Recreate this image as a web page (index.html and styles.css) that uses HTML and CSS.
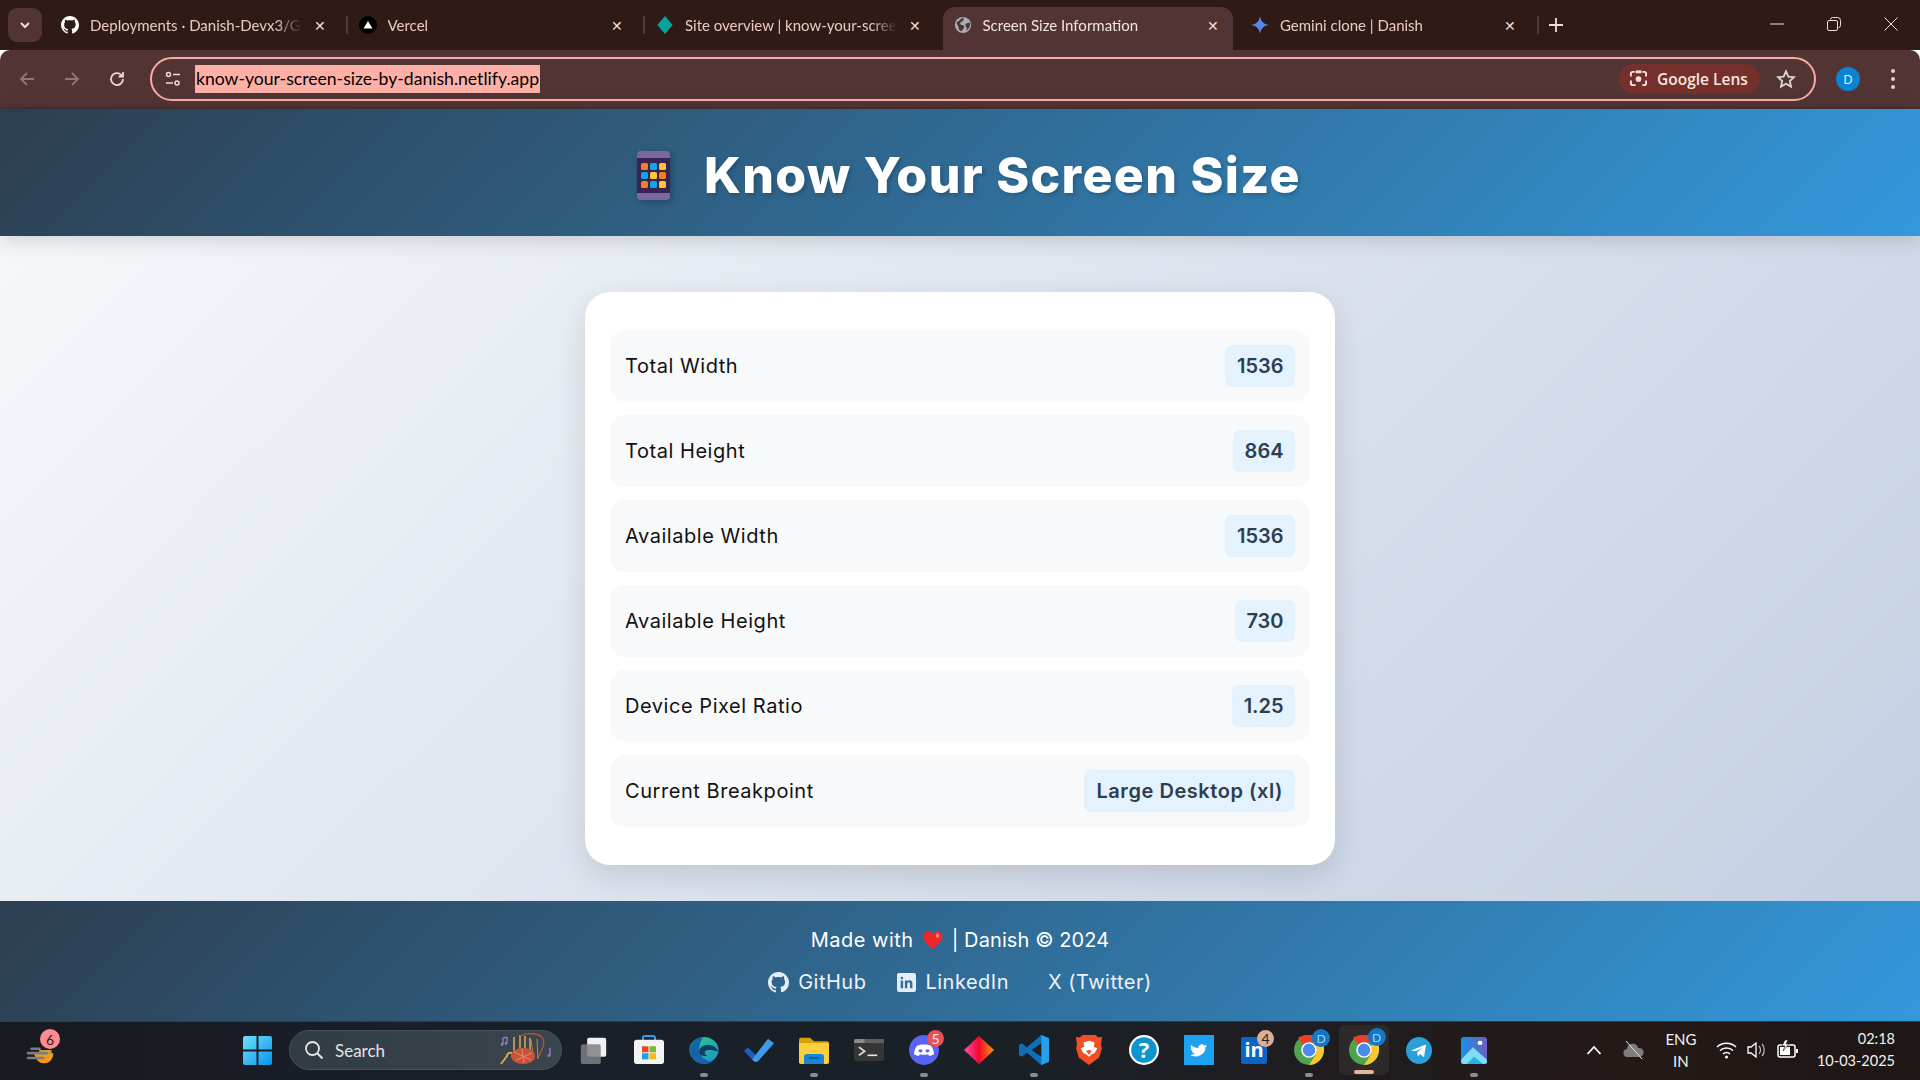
FILE: index.html
```html
<!DOCTYPE html>
<html lang="en">
<head>
<meta charset="utf-8">
<title>Screen Size Information</title>
<link rel="stylesheet" href="styles.css">
</head>
<body>
<div class="screen">
  <div class="tabstrip">
    <div class="tabmenu"><svg width="12" height="8" viewBox="0 0 12 8"><path d="M2 2l4 4 4-4" fill="none" stroke="#f3dcd6" stroke-width="2"/></svg></div>
    <div class="tab">
      <svg class="favicon" viewBox="0 0 16 16"><path fill="#fff" d="M8 0C3.600 0 0 3.600 0 8c0 3.500 2.300 6.500 5.500 7.600.4.100.5-.2.5-.4v-1.400c-2.200.5-2.700-1-2.700-1-.4-.9-.9-1.200-.9-1.200-.7-.5.100-.5.100-.5.800.100 1.200.8 1.200.8.700 1.200 1.900.9 2.300.7.100-.5.300-.9.500-1.100-1.800-.2-3.700-.9-3.700-4 0-.9.300-1.600.8-2.100-.1-.2-.4-1 .1-2.100 0 0 .7-.2 2.200.8.600-.2 1.300-.3 2-.3s1.400.1 2 .3c1.500-1 2.200-.8 2.200-.8.400 1.100.2 1.900.1 2.100.5.600.8 1.300.8 2.100 0 3.100-1.900 3.700-3.700 3.900.3.300.6.800.6 1.500v2.200c0 .2.100.5.600.4C13.700 14.500 16 11.500 16 8c0-4.400-3.600-8-8-8z"/></svg>
      <span class="tabtitle">Deployments · Danish-Devx3/Gemini</span>
      <span class="tabclose">✕</span>
    </div>
    <div class="tab sep">
      <svg class="favicon" viewBox="0 0 20 20"><circle cx="10" cy="10" r="10" fill="#000"/><path d="M10 5.500l5 8.500H5z" fill="#fff"/></svg>
      <span class="tabtitle">Vercel</span>
      <span class="tabclose">✕</span>
    </div>
    <div class="tab sep">
      <svg class="favicon" viewBox="0 0 20 20"><path d="M10 0l8.500 10L10 20 1.500 10z" fill="#05a39a"/></svg>
      <span class="tabtitle">Site overview | know-your-screen-size</span>
      <span class="tabclose">✕</span>
    </div>
    <div class="tab active">
      <svg class="favicon" viewBox="0 0 20 20"><circle cx="10" cy="10" r="9" fill="#a5adb5"/><path d="M3 7c3-1 4-4 7-5 2 2 0 3-1 4s-3 1-2 3 3 0 4 2-1 4-3 6c-3-1-3-4-3-5s-2-2-2-5zM13 9c2-1 3-2 5-1 0 4-2 7-5 9 1-2 2-3 1-4s-2-3-1-4z" fill="#513433"/></svg>
      <span class="tabtitle">Screen Size Information</span>
      <span class="tabclose">✕</span>
    </div>
    <div class="tab">
      <svg class="favicon" viewBox="0 0 20 20"><path d="M10 0c.8 5.500 3.500 9 10 10-6.500 1-9.200 4.500-10 10-.8-5.500-3.500-9-10-10 6.500-1 9.200-4.500 10-10z" fill="#5b86e8"/></svg>
      <span class="tabtitle">Gemini clone | Danish</span>
      <span class="tabclose">✕</span>
    </div>
    <div class="newtab"><svg width="14" height="14" viewBox="0 0 14 14"><path d="M7 0v14M0 7h14" stroke="#f3dcd6" stroke-width="1.800"/></svg></div>
    <div class="winctrl">
      <svg width="14" height="14" viewBox="0 0 14 14"><path d="M0 7h14" stroke="#f0dcd8" stroke-width="1"/></svg>
      <svg width="14" height="14" viewBox="0 0 14 14"><path d="M3.500 2.500a2 2 0 0 1 2-2h5a3 3 0 0 1 3 3v5a2 2 0 0 1-2 2M2 3.500h7a1.500 1.500 0 0 1 1.500 1.500v7A1.500 1.500 0 0 1 9 13.500H2A1.500 1.500 0 0 1 .5 12V5A1.500 1.500 0 0 1 2 3.500z" fill="none" stroke="#f0dcd8"/></svg>
      <svg width="14" height="14" viewBox="0 0 14 14"><path d="M.5.500l13 13M13.500.500l-13 13" stroke="#f0dcd8" stroke-width="1"/></svg>
    </div>
  </div>

  <div class="toolbar">
    <div class="navs">
      <svg width="18" height="18" viewBox="0 0 18 18"><path d="M16 9H3M9 3L3 9l6 6" fill="none" stroke="#8f7674" stroke-width="1.800"/></svg>
      <svg width="18" height="18" viewBox="0 0 18 18"><path d="M2 9h13M9 3l6 6-6 6" fill="none" stroke="#8f7674" stroke-width="1.800"/></svg>
      <svg width="18" height="18" viewBox="0 0 18 18"><path d="M15 9a6 6 0 1 1-1.800-4.200L15 6.500M15 2v4.500h-4.500" fill="none" stroke="#eed5cf" stroke-width="1.800"/></svg>
    </div>
    <div class="omnibox">
      <svg class="tune" width="16" height="16" viewBox="0 0 16 16"><g fill="none" stroke="#f3dcd6" stroke-width="1.500"><circle cx="3.500" cy="3.500" r="2"/><path d="M8 3.500h7M1 12h7"/><circle cx="12" cy="12" r="2"/></g></svg>
      <span class="url">know-your-screen-size-by-danish.netlify.app</span>
      <div class="lens">
        <svg width="19" height="19" viewBox="0 0 20 20"><g fill="none" stroke="#fbe4de" stroke-width="2"><path d="M6 3H4a2 2 0 0 0-2 2v3M2 12v3a2 2 0 0 0 2 2h3M14 3h2a2 2 0 0 1 2 2v3M18 12v3a2 2 0 0 1-2 2h-2"/><path d="M7 3h6" stroke-width="3"/></g><circle cx="10" cy="10.500" r="3" fill="#fbe4de"/></svg>
        <span>Google Lens</span>
      </div>
      <svg class="star" width="20" height="20" viewBox="0 0 22 22"><path d="M11 2.500l2.600 5.800 6.200.7-4.600 4.200 1.300 6.200L11 16.200l-5.500 3.200 1.300-6.200L2.200 9l6.200-.7z" fill="none" stroke="#e4d2ce" stroke-width="2"/></svg>
    </div>
    <div class="avatar">D</div>
    <div class="kebab"><i></i><i></i><i></i></div>
  </div>

  <header class="pagehead">
    <svg class="phone" width="33" height="49" viewBox="0 0 33 49">
      <rect width="33" height="49" rx="4" fill="#7a68a3"/>
      <rect y="7" width="33" height="35" fill="#3b2350"/>
      <g>
        <rect x="4" y="12" width="7" height="7" rx="1.500" fill="#f57c20"/><rect x="13" y="12" width="7" height="7" rx="1.500" fill="#0ea5e9"/><rect x="22" y="12" width="7" height="7" rx="1.500" fill="#fcc932"/>
        <rect x="4" y="21" width="7" height="7" rx="1.500" fill="#0ea5e9"/><rect x="13" y="21" width="7" height="7" rx="1.500" fill="#fcc932"/><rect x="22" y="21" width="7" height="7" rx="1.500" fill="#f57c20"/>
        <rect x="4" y="30" width="7" height="7" rx="1.500" fill="#f57c20"/><rect x="13" y="30" width="7" height="7" rx="1.500" fill="#0ea5e9"/><rect x="22" y="30" width="7" height="7" rx="1.500" fill="#fcc932"/>
      </g>
    </svg>
    <h1 class="pagetitle">Know Your Screen Size</h1>
  </header>

  <main class="content">
    <section class="card">
      <div class="row"><span class="label">Total Width</span><span class="chip">1536</span></div>
      <div class="row"><span class="label">Total Height</span><span class="chip">864</span></div>
      <div class="row"><span class="label">Available Width</span><span class="chip">1536</span></div>
      <div class="row"><span class="label">Available Height</span><span class="chip">730</span></div>
      <div class="row"><span class="label">Device Pixel Ratio</span><span class="chip">1.25</span></div>
      <div class="row"><span class="label">Current Breakpoint</span><span class="chip wordy">Large Desktop (xl)</span></div>
    </section>
  </main>

  <footer class="pagefoot">
    <p class="madewith"><span>Made with</span>
      <svg class="heart" width="20" height="20" viewBox="0 0 20 20"><path d="M10 19C4 14 .5 10.500.5 6.500.5 3.500 2.800 1.500 5.300 1.500 7.200 1.500 9 2.500 10 4.500c1-2 2.800-3 4.700-3 2.500 0 4.800 2 4.800 5 0 4-3.500 7.500-9.500 12.500z" fill="#f0262c"/><ellipse cx="14.500" cy="5.500" rx="1.500" ry="2.200" fill="#ff8f8f"/></svg>
      <span class="byline">| Danish © 2024</span></p>
    <nav class="links">
      <a class="link"><svg width="21" height="21" viewBox="0 0 16 16"><path fill="#e6edf4" d="M8 0C3.600 0 0 3.600 0 8c0 3.500 2.300 6.500 5.500 7.600.4.100.5-.2.5-.4v-1.400c-2.200.5-2.700-1-2.700-1-.4-.9-.9-1.200-.9-1.200-.7-.5.100-.5.100-.5.800.100 1.200.8 1.200.8.700 1.200 1.900.9 2.300.7.100-.5.300-.9.500-1.100-1.800-.2-3.700-.9-3.700-4 0-.9.300-1.600.8-2.100-.1-.2-.4-1 .1-2.100 0 0 .7-.2 2.200.8.600-.2 1.300-.3 2-.3s1.400.1 2 .3c1.500-1 2.200-.8 2.200-.8.400 1.100.2 1.900.1 2.100.5.600.8 1.300.8 2.100 0 3.100-1.900 3.700-3.700 3.900.3.300.6.800.6 1.500v2.200c0 .2.100.5.600.4C13.700 14.500 16 11.500 16 8c0-4.400-3.600-8-8-8z"/></svg>GitHub</a>
      <a class="link"><svg width="19" height="19" viewBox="0 0 18 18"><rect width="18" height="18" rx="2" fill="#e6edf4"/><path d="M3.500 7h2.300v7.500H3.500zM3.400 4.700a1.200 1.200 0 1 1 2.400 0 1.200 1.200 0 0 1-2.400 0zM7.500 7h2.200v1c.5-.8 1.300-1.200 2.300-1.200 2 0 2.600 1.300 2.600 3.200v4.500h-2.300v-4c0-1-.2-1.700-1.200-1.700s-1.400.8-1.400 1.800v3.900H7.500z" fill="#316e9c"/></svg>LinkedIn</a>
      <a class="link xlink">X (Twitter)</a>
    </nav>
  </footer>

  <div class="taskbar">
    <div class="widget">
      <svg width="32" height="30" viewBox="0 0 36 36" preserveAspectRatio="none"><path d="M11 22h22c0 6-4 12-10 12h-2c-4 0-8-5-10-12z" fill="#f39a18"/><path d="M17 18h14v6H17z" fill="#c9a02e"/><rect x="7" y="15" width="12" height="3" rx="1.500" fill="#7b7d80"/><rect x="3" y="20" width="24" height="3.500" rx="1.700" fill="#7b7d80"/><rect x="3" y="26" width="20" height="3" rx="1.500" fill="#7b7d80"/></svg>
      <span class="badge widgetbadge">6</span>
    </div>
    <div class="slot win">
      <svg width="29" height="29" viewBox="0 0 29 29"><defs><linearGradient id="wg" x1="0" y1="0" x2="1" y2="1"><stop offset="0" stop-color="#6ee0f5"/><stop offset="1" stop-color="#0a93f0"/></linearGradient></defs><path d="M0 2a2 2 0 0 1 2-2h11.500v13.500H0zM15.500 0H27a2 2 0 0 1 2 2v11.500H15.500zM0 15.500h13.500V29H2a2 2 0 0 1-2-2zM15.500 15.500H29V27a2 2 0 0 1-2 2H15.500z" fill="url(#wg)"/></svg>
    </div>
    <div class="search">
      <svg width="20" height="20" viewBox="0 0 20 20"><circle cx="8.500" cy="8.500" r="6.500" fill="none" stroke="#e6e8ea" stroke-width="1.800"/><path d="M13 13l5.500 5.500" stroke="#e6e8ea" stroke-width="2"/></svg>
      <span class="searchtext">Search</span>
      <svg class="bagpipe" width="60" height="36" viewBox="0 0 60 36"><path d="M16 5v16M22 3v16M27 4v15M32 6v12" stroke="#d9ab55" stroke-width="1.500"/><path d="M22 4c8-4 20-3 23 3s-2 11-5 19" fill="none" stroke="#b3562e" stroke-width="1.300"/><path d="M33 8l3 20M39 7l1 20" stroke="#c8883e" stroke-width="1"/><ellipse cx="25" cy="24" rx="12" ry="8" fill="#c9533a"/><path d="M16 20l17 8M18 28l16-7M24 17l2 14" stroke="#e58a6a" stroke-width="1"/><path d="M14 21c-3-1-5 1-5 3l-6 8" fill="none" stroke="#e0a24e" stroke-width="2"/><path d="M5 6v6M9 5v6M5 6l4-1" fill="none" stroke="#8d7cc7" stroke-width="1.400"/><circle cx="4" cy="12.500" r="1.400" fill="#8d7cc7"/><circle cx="8" cy="11.500" r="1.400" fill="#8d7cc7"/><path d="M52 16v7" stroke="#8d7cc7" stroke-width="1.400"/><circle cx="51" cy="23.500" r="1.500" fill="#8d7cc7"/></svg>
    </div>
    <div class="slot">
      <svg width="29" height="29" viewBox="0 0 32 32" preserveAspectRatio="none"><rect x="9" y="2" width="21" height="21" rx="2" fill="#f1f1f1"/><rect x="2" y="9" width="22" height="22" rx="2" fill="#7e8082" fill-opacity=".85"/></svg>
    </div>
    <div class="slot">
      <svg width="30" height="30" viewBox="0 0 30 32" preserveAspectRatio="none"><path d="M9 6V3a2 2 0 0 1 2-2h8a2 2 0 0 1 2 2v3" fill="none" stroke="#2aa1e6" stroke-width="2"/><rect y="5" width="30" height="26" rx="3" fill="#f3f3f3"/><rect x="8" y="12" width="6.500" height="6.500" fill="#e84a28"/><rect x="15.500" y="12" width="6.500" height="6.500" fill="#7cb82a"/><rect x="8" y="19.500" width="6.500" height="6.500" fill="#1e9fe6"/><rect x="15.500" y="19.500" width="6.500" height="6.500" fill="#fbb816"/></svg>
    </div>
    <div class="slot dot">
      <svg width="30" height="30" viewBox="0 0 32 36" preserveAspectRatio="none"><defs><linearGradient id="eg" x1="0" y1="0" x2="1" y2="1"><stop offset="0" stop-color="#2fd07a"/><stop offset="1" stop-color="#1b8ed6"/></linearGradient></defs><circle cx="16" cy="18" r="15.500" fill="url(#eg)"/><path d="M1 18C1 8 9 2 16 2c-3 3-5 9-5 15 0 8 6 14 14 15-3 2-6 3-9 3C7 35 1 27 1 18z" fill="#1564a8"/><path d="M11 20c0-5 4-8 9-8s10 3 11 8c-5-2-12-3-14 0-1 2 1 4 3 5-5 1-9-1-9-5z" fill="#0f3d66"/></svg>
    </div>
    <div class="slot">
      <svg width="30" height="24" viewBox="0 0 30 28" preserveAspectRatio="none"><path d="M0 15l4-4 8 9-4 5z" fill="#1c5fb8"/><path d="M8 25L24 1l6 5-16 21a3 3 0 0 1-4 0z" fill="#3d9be9"/></svg>
    </div>
    <div class="slot dot">
      <svg width="30" height="27" viewBox="0 0 30 32" preserveAspectRatio="none"><path d="M0 3a2 2 0 0 1 2-2h9l4 4h13a2 2 0 0 1 2 2v6H0z" fill="#d89f0e"/><path d="M0 7h30v23a2 2 0 0 1-2 2H2a2 2 0 0 1-2-2z" fill="#fbcf3b"/><path d="M5 32v-9a3 3 0 0 1 3-3h14a3 3 0 0 1 3 3v9z" fill="#1587d6"/><path d="M10 25h10" stroke="#0d5a9c" stroke-width="2"/></svg>
    </div>
    <div class="slot">
      <svg width="30" height="22" viewBox="0 0 31 27" preserveAspectRatio="none"><rect width="31" height="27" rx="2" fill="#353636"/><path d="M0 2a2 2 0 0 1 2-2h27a2 2 0 0 1 2 2v3H0z" fill="#8a8a8a"/><path d="M11 0h20v5H11z" fill="#5f5f5f"/><path d="M5 10l6 5-6 5" fill="none" stroke="#d8d8d8" stroke-width="2"/><path d="M14 20h10" stroke="#e8e8e8" stroke-width="2"/></svg>
    </div>
    <div class="slot dot">
      <svg width="30" height="30" viewBox="0 0 30 36" preserveAspectRatio="none"><ellipse cx="15" cy="18" rx="15" ry="18" fill="#5865f2"/><path d="M8 13c4-2 10-2 14 0 2 3 3 7 3 10-2 1-3 2-5 2l-1-2c-2 1-6 1-8 0l-1 2c-2 0-3-1-5-2 0-3 1-7 3-10z" fill="#fff"/><circle cx="11.500" cy="19" r="2" fill="#5865f2"/><circle cx="18.500" cy="19" r="2" fill="#5865f2"/></svg>
      <span class="badge discordbadge">5</span>
    </div>
    <div class="slot">
      <svg width="30" height="28" viewBox="0 0 30 34" preserveAspectRatio="none"><defs><linearGradient id="dg" x1="0" x2="1" y1="0" y2="0"><stop offset="0" stop-color="#ff4fa8"/><stop offset=".5" stop-color="#f2072f"/><stop offset="1" stop-color="#ff9a00"/></linearGradient></defs><path d="M15 0l15 17-15 17L0 17z" fill="url(#dg)"/></svg>
    </div>
    <div class="slot dot">
      <svg width="30" height="30" viewBox="0 0 31 36" preserveAspectRatio="none"><path d="M31 4v28l-8 4L8 21 3 26l-3-2V12l3-2 5 5L23 0z" fill="#0e70bd"/><path d="M23 0l8 4v28l-8 4z" fill="#26a0ea"/><path d="M23 10L13 18l10 8z" fill="#1d2025"/></svg>
    </div>
    <div class="slot">
      <svg width="26" height="30" viewBox="0 0 28 36" preserveAspectRatio="none"><path d="M7 0h14l3 3 4-1-1 10 1 4-3 11-11 9-11-9L0 16l1-4L0 2l4 1z" fill="#f04e23"/><path d="M8 9l6-2 6 2-1 5 4 2-3 6-3 1-3 3-3-3-3-1-3-6 4-2z" fill="#fff"/><path d="M11 19l3-1 3 1-3 5z" fill="#f04e23"/></svg>
    </div>
    <div class="slot">
      <svg width="30" height="30" viewBox="0 0 30 30"><circle cx="15" cy="15" r="15" fill="#fff"/><circle cx="15" cy="15" r="12.800" fill="#0b95cf"/><text class="helpmark" x="15" y="23" text-anchor="middle">?</text></svg>
    </div>
    <div class="slot">
      <svg width="30" height="30" viewBox="0 0 30 36" preserveAspectRatio="none"><rect width="30" height="36" fill="#1da1f2"/><path d="M23 13c-.7.300-1.400.5-2 .6.700-.4 1.300-1.100 1.600-2-.7.400-1.400.7-2.200.9a3.500 3.500 0 0 0-6 3.200c-2.900-.2-5.500-1.600-7.200-3.800-1 1.700-.5 3.800 1.100 4.800-.6 0-1.100-.2-1.600-.4 0 1.700 1.200 3.100 2.800 3.500-.5.100-1 .2-1.600.1.500 1.400 1.700 2.400 3.300 2.400A7 7 0 0 1 6 24a10 10 0 0 0 15.400-8.900c.6-.5 1.200-1.100 1.600-2.100z" fill="#fff"/></svg>
    </div>
    <div class="slot">
      <svg width="26" height="27" viewBox="0 0 26 27"><rect width="26" height="27" rx="2" fill="#0a66c2"/><text class="inmark" x="13" y="20" text-anchor="middle">in</text></svg>
      <span class="badge linkbadge">4</span>
    </div>
    <div class="slot dot">
      <svg class="chrome" width="30" height="30" viewBox="0 0 30 36" preserveAspectRatio="none"><ellipse cx="15" cy="18" rx="15" ry="18" fill="#4fa34f"/><path d="M15 0c6 0 11 3.500 13.500 9H15c-3 0-5 2-6 4L4 3c3-2 7-3 11-3z" fill="#e5412f"/><path d="M28.500 9c2.500 5 2 12-.5 18-3 5-7 9-13 9l7-13c1-3 0-6-2-9z" fill="#fbc62f"/><ellipse cx="15" cy="18" rx="7" ry="8.500" fill="#4b8af0" stroke="#fff" stroke-width="1.500"/></svg>
      <span class="badge chromebadge">D</span>
    </div>
    <div class="slot current">
      <svg class="chrome" width="30" height="30" viewBox="0 0 30 36" preserveAspectRatio="none"><ellipse cx="15" cy="18" rx="15" ry="18" fill="#4fa34f"/><path d="M15 0c6 0 11 3.500 13.500 9H15c-3 0-5 2-6 4L4 3c3-2 7-3 11-3z" fill="#e5412f"/><path d="M28.500 9c2.500 5 2 12-.5 18-3 5-7 9-13 9l7-13c1-3 0-6-2-9z" fill="#fbc62f"/><ellipse cx="15" cy="18" rx="7" ry="8.500" fill="#4b8af0" stroke="#fff" stroke-width="1.500"/></svg>
      <span class="badge chromebadge">D</span>
    </div>
    <div class="slot">
      <svg width="26" height="27" viewBox="0 0 26 32" preserveAspectRatio="none"><ellipse cx="13" cy="16" rx="13" ry="16" fill="#2a9fd8"/><path d="M5 16l15-7-2 15-4-4-2 3-1-5 6-5-8 4z" fill="#fff"/></svg>
    </div>
    <div class="slot dot">
      <svg width="26" height="27" viewBox="0 0 26 32" preserveAspectRatio="none"><defs><linearGradient id="pg" x1="0" y1="0" x2="1" y2="0"><stop offset="0" stop-color="#1d8fe8"/><stop offset="1" stop-color="#6b5fc2"/></linearGradient></defs><rect width="26" height="32" rx="3" fill="url(#pg)"/><circle cx="19" cy="7" r="2.500" fill="#fff"/><path d="M0 27L12 12l14 15v2a3 3 0 0 1-3 3H3a3 3 0 0 1-3-3z" fill="#7fdcf2"/><path d="M6 32l7-9 9 9z" fill="#27b0e8"/></svg>
    </div>
    <div class="tray">
      <svg class="trayicon chev" width="16" height="10" viewBox="0 0 16 10"><path d="M1.500 9L8 2l6.500 7" fill="none" stroke="#fff" stroke-width="1.800"/></svg>
      <svg class="trayicon" width="22" height="18" viewBox="0 0 22 18"><path d="M5 16a4 4 0 0 1-1-8c0-3 3-6 7-5 2 0 4 2 4 4a4.500 4.500 0 0 1 2 9z" fill="#7f7c7c"/><path d="M3 0l16 18" stroke="#e8e8e8" stroke-width="1"/></svg>
      <div class="lang"><span>ENG</span><span>IN</span></div>
      <svg class="trayicon" width="21" height="18" viewBox="0 0 21 18"><g fill="none" stroke="#fff" stroke-width="1.500"><path d="M1 6c5-5 14-5 19 0M4 9.500c3.500-3.500 9.500-3.500 13 0M7 13c2-2 5-2 7 0"/></g><circle cx="10.500" cy="16" r="1.500" fill="#fff"/></svg>
      <svg class="trayicon" width="20" height="18" viewBox="0 0 20 18"><path d="M1 6h3l5-4v14l-5-4H1z" fill="none" stroke="#fff" stroke-width="1.300"/><path d="M12 5c2 2 2 6 0 8M15 3c3 3 3 9 0 12" fill="none" stroke="#bfbfbf" stroke-width="1.200"/></svg>
      <svg class="trayicon" width="22" height="20" viewBox="0 0 22 20"><rect x="1" y="5" width="17" height="12" rx="2" fill="none" stroke="#fff" stroke-width="1.500"/><path d="M3 7h10v8H3z" fill="#fff"/><path d="M19 9h2v4h-2z" fill="#fff"/><path d="M8 0L5 6h3l-2 5 6-7H9l2-4z" fill="#fff" stroke="#1d1715" stroke-width=".6"/></svg>
      <div class="clock"><span>02:18</span><span>10-03-2025</span></div>
    </div>
  </div>
</div>
</body>
</html>
```
FILE: styles.css
```css
* { box-sizing: border-box; margin: 0; padding: 0; }
html, body { width: 1920px; height: 1080px; overflow: hidden; }
body { font-family: "Open Sans", "Liberation Sans", sans-serif; }
.screen { width: 1920px; height: 1080px; display: flex; flex-direction: column; overflow: hidden; }

/* browser tab strip */
.tabstrip { height: 50px; background: #2f1a16; display: flex; align-items: flex-end; padding-left: 8px; flex: none; position: relative; }
.tabmenu { width: 34px; height: 34px; margin-bottom: 8px; background: #513433; border-radius: 9px; display: flex; align-items: center; justify-content: center; margin-right: 8px; flex: none; }
.tab { width: 297.5px; height: 43px; display: flex; align-items: center; padding: 0 18px 7px 11px; flex: none; position: relative; color: #e9c9c1; font: 15px "Lato", "Noto Sans", sans-serif; }
.tab.sep::before { content: ""; position: absolute; left: -2px; top: 9px; width: 2px; height: 18px; background: #523a36; }
.tab.active { width: 290px; margin-right: 7.5px; background: #513433; border-radius: 12px 12px 0 0; color: #f5e3de; padding-left: 11px; padding-right: 10px; }
.favicon { width: 18px; height: 18px; flex: none; margin-right: 11px; }
.tabtitle { flex: 1; min-width: 0; overflow: hidden; white-space: nowrap; -webkit-mask-image: linear-gradient(90deg, #000 88%, transparent 100%); mask-image: linear-gradient(90deg, #000 88%, transparent 100%); }
.tabclose { width: 20px; text-align: center; font-size: 14px; color: #f3dcd6; flex: none; margin-left: 8px; }
.newtab { width: 44px; height: 43px; display: flex; align-items: center; justify-content: center; padding-bottom: 7px; margin-left: -4px; position: relative; flex: none; }
.newtab::before { content: ""; position: absolute; left: 3px; top: 9px; width: 2px; height: 18px; background: #523a36; }
.winctrl { margin-left: auto; height: 50px; display: flex; align-items: center; gap: 43px; padding: 0 22px 2px 0; }

/* browser toolbar */
.toolbar { height: 59px; background: #513433; display: flex; align-items: center; border-radius: 10px 10px 0 0; flex: none; border-bottom: 2px solid #463130; }
.navs { display: flex; align-items: center; gap: 27px; padding-left: 18px; width: 150px; flex: none; }
.omnibox { flex: 1 0 0; min-width: 0; height: 44px; border: 2.5px solid #f5aea5; border-radius: 22px; display: flex; align-items: center; padding: 0 18px 0 13px; }
.tune { flex: none; margin-right: 14px; }
.url { background: #ffb0a6; color: #000; font: 17.6px/28px "Lato", "Noto Sans", sans-serif; height: 28px; padding: 0 1px; white-space: nowrap; }
.lens { margin-left: auto; height: 30px; width: 141px; background: #75302c; border-radius: 15px; display: flex; align-items: center; gap: 9px; padding-left: 10px; color: #fbe4de; font: 600 15.5px "Open Sans", sans-serif; flex: none; white-space: nowrap; }
.star { margin-left: 16px; flex: none; }
.avatar { width: 24px; height: 24px; border-radius: 50%; background: #0a84d0; color: #eaf4fb; font: 13px/24px "Open Sans", sans-serif; text-align: center; margin-left: 20px; flex: none; }
.kebab { display: flex; flex-direction: column; gap: 4px; margin-left: 31px; margin-right: 25px; flex: none; }
.kebab i { width: 4px; height: 4px; border-radius: 50%; background: #e8cfc9; display: block; }

/* page */
.pagehead { height: 127px; background: linear-gradient(135deg, #2c3e50, #3498db); display: flex; align-items: center; padding: 6px 0 0 637px; flex: none; box-shadow: 0 4px 20px rgba(0,0,0,.15); position: relative; z-index: 1; }
.phone { flex: none; margin-right: 34px; filter: drop-shadow(2px 2px 3px rgba(0,0,0,.25)); }
.pagetitle { font: 800 50px/1 "Inter", "Open Sans", sans-serif; color: #fff; text-shadow: 2px 2px 4px rgba(0,0,0,.2); white-space: nowrap; letter-spacing: 1.300px; margin-top: -2px; }
.content { height: 665px; background: linear-gradient(135deg, #f5f7fa, #c3cfe2); padding-top: 56px; flex: none; }
.card { width: 750px; height: 573px; margin: 0 auto; background: #fff; border-radius: 25px; padding: 38px 25px; box-shadow: 0 10px 30px rgba(0,0,0,.12); display: flex; flex-direction: column; gap: 13px; }
.row { height: 72px; background: #f8f9fa; border-radius: 15px; display: flex; align-items: center; justify-content: space-between; padding: 0 15px; flex: none; }
.label { font: 400 20px "Inter", sans-serif; color: #111; letter-spacing: .55px; }
.chip { height: 42px; background: #e3f2fd; border-radius: 7px; padding: 0 11.500px; color: #2c3e50; font: 600 20px/42px "Inter", sans-serif; }
.chip.wordy { letter-spacing: .55px; padding: 0 12px; }

/* page footer */
.pagefoot { height: 120px; background: linear-gradient(135deg, #2c3e50, #3498db); color: #fff; flex: none; display: flex; flex-direction: column; align-items: center; padding-top: 24px; gap: 12px; font-family: "Inter", sans-serif; position: relative; z-index: 1; }
.madewith { font-size: 20px; line-height: 30px; display: flex; align-items: center; gap: 9px; font-weight: 400; letter-spacing: .5px; }
.byline { letter-spacing: .1px; }
.heart { flex: none; }
.links { display: flex; align-items: center; gap: 31px; font-size: 20px; line-height: 30px; color: #eef3f8; letter-spacing: .5px; }
.link { display: flex; align-items: center; gap: 9px; }
.xlink { margin-left: 8px; }

/* taskbar */
.taskbar { height: 59px; flex: none; background: linear-gradient(90deg, #191a20 0%, #19202a 30%, #1b2026 55%, #241917 85%, #1d1715 100%); border-top: 1px solid #3a3a3c; display: flex; align-items: center; position: relative; padding-bottom: 2px; }
.widget { width: 80px; height: 56px; display: flex; align-items: center; justify-content: center; position: relative; margin-right: 150px; flex: none; }
.slot { width: 55px; height: 56px; display: flex; align-items: center; justify-content: center; position: relative; flex: none; }
.slot.dot::after { content: ""; position: absolute; bottom: 1px; left: 50%; margin-left: -4px; width: 8px; height: 4px; border-radius: 2px; background: #8a8d90; }
.slot.current { background: rgba(255,255,255,.06); border-radius: 6px; width: 50px; height: 50px; margin: 0 2.500px; }
.slot.current::after { content: ""; position: absolute; bottom: 1px; left: 50%; margin-left: -10px; width: 20px; height: 4px; border-radius: 2px; background: #e6b39c; }
.search { width: 273px; height: 40px; margin: 0 4px; border-radius: 20px; background: linear-gradient(90deg, #313b44, #3a454d); border: 1px solid #49535b; display: flex; align-items: center; padding-left: 14px; flex: none; color: #e3e5e7; font-size: 16px; }
.searchtext { margin-left: 11px; font-family: "Lato", sans-serif; font-size: 17px; }
.bagpipe { margin-left: auto; margin-right: 3px; }
.badge { position: absolute; border-radius: 50%; display: flex; align-items: center; justify-content: center; font: 14px "Lato", sans-serif; color: #222; }
.widgetbadge { width: 20px; height: 20px; background: #ff8a94; top: 7px; left: 40px; }
.discordbadge { width: 17px; height: 17px; background: #e6505a; color: #fde3e3; top: 8px; right: 7px; }
.linkbadge { width: 17px; height: 17px; background: #dcae96; top: 8px; right: 7px; }
.chromebadge { width: 18px; height: 18px; background: #0f78c8; color: #9fd2f5; top: 7px; right: 6px; font-size: 12px; }
.slot.current .chromebadge { top: 3px; right: 3px; }
.helpmark { font: 700 22px "Open Sans", sans-serif; fill: #fff; }
.inmark { font: 700 20px "Open Sans", sans-serif; fill: #fff; }
.tray { margin-left: auto; display: flex; align-items: center; color: #f2f2f2; height: 56px; padding-right: 25px; font: 15px "Lato", "Noto Sans", sans-serif; }
.trayicon { flex: none; margin-right: 10px; }
.trayicon.chev { margin-right: 21px; }
.lang { display: flex; flex-direction: column; align-items: center; line-height: 22px; width: 50px; margin: 0 10px 0 1px; }
.clock { display: flex; flex-direction: column; align-items: flex-end; line-height: 22px; margin-left: 8px; font-size: 14.5px; }
```
